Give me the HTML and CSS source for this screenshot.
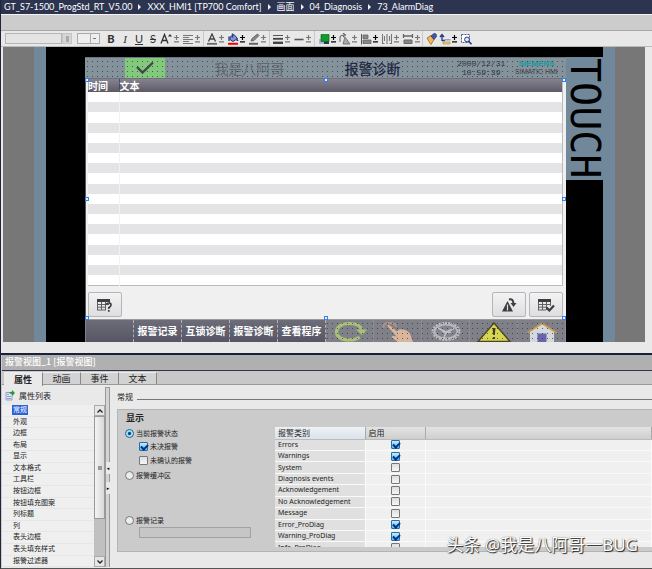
FILE: index.html
```html
<!DOCTYPE html>
<html lang="zh-CN">
<head>
<meta charset="utf-8">
<title>73_AlarmDiag</title>
<link rel="stylesheet" href="styles.css">
</head>
<body>
<svg class="defs" aria-hidden="true">
  <symbol id="pm" viewBox="0 0 5 8"><path d="M2.5 0v5M0 2.5h5M0 6.8h5" stroke="currentColor" stroke-width="1.2" fill="none"/></symbol>
</svg>
<div class="app">
  <nav class="crumbs" aria-label="路径">
    <a href="#">GT_S7-1500_ProgStd_RT_V5.00</a><i></i><a href="#">XXX_HMI1 [TP700 Comfort]</a><i></i><a href="#">画面</a><i></i><a href="#">04_Diagnosis</a><i></i><a href="#">73_AlarmDiag</a>
  </nav>
  <div class="strip"></div>
  <div class="toolbar" role="toolbar" aria-label="格式">
    <input class="font-name" type="text" aria-label="字体"><span class="font-btn"></span>
    <select class="font-size" aria-label="字号"><option></option></select>
    <div class="group first">
      <button class="tool b" aria-label="粗体">B</button>
      <button class="tool i" aria-label="斜体">I</button>
      <button class="tool u" aria-label="下划线">U</button>
      <button class="tool s" aria-label="删除线">S</button>
      <button class="split dim" aria-label="字号"><svg class="ic" viewBox="0 0 14 12"><path d="M1 10.500L4.500 1.500L8 10.500M2.300 7.500h4.500" stroke="#333" stroke-width="1.300" fill="none"/><path d="M8 3.500l2-2.500 2 2.500z" fill="#333"/></svg><svg class="pm"><use href="#pm"/></svg></button>
      <button class="split dim" aria-label="对齐"><svg class="ic" viewBox="0 0 14 12"><path d="M2 2.500h10M2 4.500h6M2 6.500h10M2 8.500h6M2 10.500h10" stroke="#777" stroke-width="1.200"/></svg><svg class="pm"><use href="#pm"/></svg></button>
    </div>
    <div class="group">
      <button class="split dim" aria-label="文字颜色"><svg class="ic" viewBox="0 0 14 12"><path d="M3.500 8.500L7 1L10.500 8.500M4.800 6h4.500" stroke="#444" stroke-width="1.300" fill="none"/><path d="M2 10.800h10" stroke="#666" stroke-width="1.800"/></svg><svg class="pm"><use href="#pm"/></svg></button>
      <button class="split" aria-label="填充颜色"><svg class="ic" viewBox="0 0 14 12"><path d="M4 4l4-2.500 3.500 4-4.500 3-3-2z" fill="#7e96cf" stroke="#26387c"/><path d="M3 8V3.500M6.500 0.500v4" stroke="#26387c" stroke-width="1.300"/><path d="M10.500 4l2 4h-2z" fill="#26387c"/><path d="M2 10.800h10" stroke="#f00" stroke-width="2"/></svg><svg class="pm"><use href="#pm"/></svg></button>
      <button class="split dim" aria-label="线条颜色"><svg class="ic" viewBox="0 0 14 12"><path d="M4 8l1-2.500L10.500 1l1.500 1.500L7 7.500z" fill="#888" stroke="#555" stroke-width=".8"/><path d="M2 10.800h9" stroke="#666" stroke-width="2"/></svg><svg class="pm"><use href="#pm"/></svg></button>
    </div>
    <div class="group">
      <button class="split dim" aria-label="线宽"><svg class="ic" viewBox="0 0 14 12"><path d="M2 2.500h10" stroke="#555"/><path d="M2 5.800h10" stroke="#444" stroke-width="1.800"/><path d="M2 9.800h10" stroke="#444" stroke-width="2.400"/></svg><svg class="pm"><use href="#pm"/></svg></button>
      <button class="split dim" aria-label="线型"><svg class="ic" viewBox="0 0 14 12"><path d="M2.500 6.500h9" stroke="#555" stroke-width="1.600"/></svg><svg class="pm"><use href="#pm"/></svg></button>
    </div>
    <div class="group wide">
      <button class="split" aria-label="层次"><svg class="ic" viewBox="0 0 14 12"><path d="M2 6h5v5H2z" fill="#a9b6d8"/><path d="M7 7h5v4H7z" fill="#335"/><path d="M4 1.500h8v7H4z" fill="#129a2c" stroke="#0a6a1b" stroke-width=".7"/></svg><svg class="pm"><use href="#pm"/></svg></button>
      <button class="split dim" aria-label="旋转"><svg class="ic" viewBox="0 0 14 12"><path d="M7 4l5 7H5z" fill="#aaa" stroke="#777"/><path d="M2 9V5q0-3 4-3M5 0l2.500 2L5 4" stroke="#666" stroke-width="1.100" fill="none"/></svg><svg class="pm"><use href="#pm"/></svg></button>
      <button class="split" aria-label="左对齐"><svg class="ic" viewBox="0 0 14 12"><path d="M2.500 1v10.500" stroke="#555"/><path d="M4 2h5v3.500H4zM4 7h8v3.500H4z" fill="#888" stroke="#666" stroke-width=".8"/></svg><svg class="pm"><use href="#pm"/></svg></button>
      <button class="split dim" aria-label="分布"><svg class="ic" viewBox="0 0 14 12"><path d="M2.500 1v9.500h2M11.500 1v9.500h-2M7 1v10M4.500 3v5M9.500 3v5" stroke="#777" stroke-width="1.100" fill="none"/></svg><svg class="pm"><use href="#pm"/></svg></button>
      <button class="split dim" aria-label="等宽"><svg class="ic" viewBox="0 0 14 12"><path d="M2.500 1v4M11.500 1v4M2.500 3h9" stroke="#666" stroke-width="1.300"/><path d="M3 7h8v3.500H3z" fill="#888" stroke="#666"/></svg><svg class="pm"><use href="#pm"/></svg></button>
    </div>
    <div class="group">
      <button class="tool" aria-label="格式刷"><svg class="ic" viewBox="0 0 14 12"><path d="M3 5l4-2.500 3 4L7 11.500 5.500 9.500z" fill="#f0b95a" stroke="#a5641c" stroke-width=".8"/><path d="M7 3l3-2.500 2 .5.500 2.500L10 6.500z" fill="#4158a5" stroke="#26387c" stroke-width=".8"/></svg></button>
      <button class="split" aria-label="跳转顺序"><svg class="ic" viewBox="0 0 14 12"><path d="M4 8V2.500M2 4l2-2.500L6 4M4 7.500h3" stroke="#26387c" stroke-width="1.300" fill="none"/><path d="M6.500 6h6v1.500h-6z" fill="#8fa2cf"/><path d="M5 9h7v2H5z" fill="#f3d28b" stroke="#b78d35" stroke-width=".7"/></svg><svg class="pm"><use href="#pm"/></svg></button>
      <button class="tool" aria-label="缩放"><svg class="ic" viewBox="0 0 14 12"><path d="M2.500 1.500h8v8h-8z" fill="#fff" stroke="#445a94" stroke-dasharray="2 1"/><circle cx="8" cy="6.500" r="2.400" fill="#dfe9fa" stroke="#26387c"/><path d="M9.700 8.200l2.800 3" stroke="#26387c" stroke-width="1.600"/></svg></button>
    </div>
  </div>

  <main class="canvas">
    <div class="bezel"></div>
    <div class="black"></div>
    <div class="screen">
      <div class="head dots">
        <span class="ok"><svg viewBox="0 0 20 14"><path d="M2 6l5.500 5.500L18 1.500" fill="none" stroke="#45484a" stroke-width="2.400"/></svg></span>
        <span class="owner">我是八阿哥</span>
        <span class="title">报警诊断</span>
        <time>2000/12/31<br>10:59:39</time>
        <span class="brand"><b>SIEMENS</b><br>SIMATIC HMI</span>
      </div>
      <div class="alarm">
        <table class="rows">
          <thead><tr><th>时间</th><th>文本</th></tr></thead>
          <tbody>
            <tr><td></td><td></td></tr><tr><td></td><td></td></tr><tr><td></td><td></td></tr><tr><td></td><td></td></tr><tr><td></td><td></td></tr>
            <tr><td></td><td></td></tr><tr><td></td><td></td></tr><tr><td></td><td></td></tr><tr><td></td><td></td></tr><tr><td></td><td></td></tr>
            <tr><td></td><td></td></tr><tr><td></td><td></td></tr><tr><td></td><td></td></tr><tr><td></td><td></td></tr><tr><td></td><td></td></tr>
            <tr><td></td><td></td></tr><tr><td></td><td></td></tr><tr><td></td><td></td></tr><tr><td></td><td></td></tr>
          </tbody>
        </table>
        <div class="actions">
          <button aria-label="信息文本"><svg viewBox="0 0 18 14"><path d="M1 1h13v3H1z" fill="#3f3c40"/><path d="M1.500 4v8M5.500 4v8M9.500 4v8M13.500 4v2M1 6.500h12M1 9.200h9M1 12h9" stroke="#625f64" fill="none"/><path d="M10.500 7q0-2 2.300-2T15 7q0 1.300-2.200 2.800V11M12.800 12v1.800" stroke="#3f3c40" stroke-width="1.700" fill="none"/></svg></button>
          <span></span>
          <button aria-label="报警回路"><svg viewBox="0 0 18 14"><path d="M7.500 3l5.500 10.500H2z" fill="#3f3c40"/><path d="M7.500 6.500v6" stroke="#ddd" stroke-width="1.200"/><path d="M9 1.500q4-1.500 4.500 4" stroke="#3f3c40" stroke-width="2" fill="none"/><path d="M10.500 5h6l-3 4z" fill="#3f3c40"/></svg></button>
          <button aria-label="确认"><svg viewBox="0 0 18 14"><path d="M1 1h13v3H1z" fill="#3f3c40"/><path d="M1.500 4v8M5.500 4v8M9.500 4v8M13.500 4v4M1 6.500h13M1 9.200h9M1 12h8" stroke="#625f64" fill="none"/><path d="M9.500 9.500l2.800 3L17 7.500" stroke="#3f3c40" stroke-width="2.200" fill="none"/></svg></button>
        </div>
        <i class="h tl"></i><i class="h tc"></i><i class="h tr"></i><i class="h ml"></i><i class="h mr"></i><i class="h bl"></i><i class="h bc"></i><i class="h br"></i>
      </div>
      <div class="keys dots">
        <button class="key" aria-label="空"></button><button class="key">报警记录</button><button class="key">互锁诊断</button><button class="key">报警诊断</button><button class="key">查看程序</button>
        <button class="pic" aria-label="循环"><svg viewBox="0 0 36 22"><path d="M29.500 9.500C28 4 22 3.500 17 3.500C9 3.500 4.500 7.500 4.500 12S9 20 17 20q7 0 10.500-3" fill="none" stroke="#a9c077" stroke-width="3.200"/><path d="M24 9.500h11l-5 5.500z" fill="#a9c077"/></svg></button>
        <button class="pic" aria-label="手动"><svg viewBox="0 0 36 22"><path d="M4 8q-2-5 5-5t7 4" fill="none" stroke="#b58f88" stroke-width="2"/><path d="M7 5.500q2-1.500 4 1l6 5 2-2q6-1 11 4l3 8.500H18l-6-4.500q-1-2 1.500-1.500l3 .5z" fill="#d9b59c"/></svg></button>
        <button class="pic" aria-label="设置"><svg viewBox="0 0 36 22"><ellipse cx="18" cy="11.500" rx="13.500" ry="8.500" fill="none" stroke="#bfc1c4" stroke-width="2" stroke-dasharray="2 1.200"/><ellipse cx="18" cy="11.500" rx="11.500" ry="7" fill="#85858e" stroke="#b5b7ba" stroke-width="2"/><path d="M18 12l-8-4M18 12l8-3.500M18 12l-2 6M14 11l4 2 5-1" stroke="#bfc1c4" stroke-width="1.600" fill="none"/></svg></button>
        <button class="pic" aria-label="报警"><svg viewBox="0 0 36 22"><path d="M18 3L34 21.500H2z" fill="#d8d650" stroke="#46462c" stroke-width="1.400"/><path d="M16.500 8h3l-.7 7h-1.600zM17 17h2v2h-2z" fill="#3d3d28"/></svg></button>
        <button class="pic" aria-label="主页"><svg viewBox="0 0 36 22"><path d="M6 11L18 4l12 7v11H6z" fill="#d3d8da"/><path d="M3 13L18 3.500 33 13" fill="none" stroke="#c99b52" stroke-width="1.500"/><path d="M13.500 13.500h9V22h-9z" fill="#6763ae"/></svg></button>
      </div>
    </div>
    <div class="side"><div class="touch">TOUCH</div></div>
    <div class="bezel"></div>
  </main>

  <section class="inspector">
    <h2>报警视图_1 [报警视图]</h2>
    <div class="tabs" role="tablist">
      <button role="tab" aria-selected="true" class="on">属性</button><button role="tab">动画</button><button role="tab">事件</button><button role="tab">文本</button>
    </div>
    <div class="panel">
      <aside>
        <div class="aside-title"><svg viewBox="0 0 10 11"><path d="M1 2.500h6v7.500H1z" fill="#dde5f4" stroke="#8593bd" stroke-width=".8"/><path d="M2.500 4.500h1M2.500 6.500h1M2.500 8.500h1M4.500 6.500h1M4.500 8.500h1" stroke="#4a5fa5"/><path d="M4 3q1-1.500 3-1.300V0l3 3-3 3V4Q5 3.500 4 3z" fill="#1d9a35"/></svg>属性列表</div>
        <div class="nav">
          <ul>
            <li><a class="sel" href="#">常规</a></li><li><a href="#">外观</a></li><li><a href="#">边框</a></li><li><a href="#">布局</a></li><li><a href="#">显示</a></li><li><a href="#">文本格式</a></li><li><a href="#">工具栏</a></li><li><a href="#">按钮边框</a></li><li><a href="#">按钮填充图案</a></li><li><a href="#">列标题</a></li><li><a href="#">列</a></li><li><a href="#">表头边框</a></li><li><a href="#">表头填充样式</a></li><li><a href="#">报警过滤器</a></li>
          </ul>
          <div class="scroll">
            <button aria-label="向上"><svg viewBox="0 0 8 6"><path d="M1.500 4.500L4 2l2.500 2.500" fill="none" stroke="#222" stroke-width="1.300"/></svg></button>
            <div class="thumb"><i></i></div>
            <button aria-label="向下"><svg viewBox="0 0 8 6"><path d="M1.500 1.500L4 4l2.500-2.500" fill="none" stroke="#222" stroke-width="1.300"/></svg></button>
          </div>
        </div>
      </aside>
      <div class="splitter"><button aria-label="收起">◂</button><button aria-label="展开">▸</button></div>
      <div class="content">
        <h3>常规</h3>
        <div class="box">
          <form class="opts">
            <h4>显示</h4>
            <label><input type="radio" name="m" checked>当前报警状态</label>
            <label class="sub"><input type="checkbox" checked>未决报警</label>
            <label class="sub second"><input type="checkbox">未确认的报警</label>
            <label><input type="radio" name="m">报警缓冲区</label>
            <label class="log"><input type="radio" name="m">报警记录</label>
            <input class="field" type="text" aria-label="报警记录" disabled>
          </form>
          <div class="clip">
            <table class="classes">
              <thead><tr><th>报警类别</th><th>启用</th><th></th></tr></thead>
              <tbody>
                <tr><td>Errors</td><td><input type="checkbox" aria-label="Errors" checked></td><td></td></tr>
                <tr><td>Warnings</td><td><input type="checkbox" aria-label="Warnings" checked></td><td></td></tr>
                <tr><td>System</td><td><input type="checkbox" aria-label="System"></td><td></td></tr>
                <tr><td>Diagnosis events</td><td><input type="checkbox" aria-label="Diagnosis events"></td><td></td></tr>
                <tr><td>Acknowledgement</td><td><input type="checkbox" aria-label="Acknowledgement"></td><td></td></tr>
                <tr><td>No Acknowledgement</td><td><input type="checkbox" aria-label="No Acknowledgement"></td><td></td></tr>
                <tr><td>Message</td><td><input type="checkbox" aria-label="Message"></td><td></td></tr>
                <tr><td>Error_ProDiag</td><td><input type="checkbox" aria-label="Error_ProDiag" checked></td><td></td></tr>
                <tr><td>Warning_ProDiag</td><td><input type="checkbox" aria-label="Warning_ProDiag" checked></td><td></td></tr>
                <tr><td>Info_ProDiag</td><td><input type="checkbox" aria-label="Info_ProDiag"></td><td></td></tr>
              </tbody>
            </table>
          </div>
        </div>
      </div>
    </div>
    <div class="mark">头条 @我是八阿哥一BUG</div>
  </section>
</div>
</body>
</html>
```
FILE: styles.css
```css
* { box-sizing: border-box; }
body {
  margin: 0;
  background: #e9e9e9;
  color: #222;
  font: 8px/11px "Noto Sans", "Noto Sans CJK SC", sans-serif;
}
button, input, select {
  margin: 0;
  padding: 0;
  font: inherit;
  color: inherit;
  border: 0;
  background: none;
  border-radius: 0;
}
h2, h3, h4, ul { margin: 0; padding: 0; list-style: none; }
a { color: inherit; text-decoration: none; }
.defs { display: none; }
.app { min-height: 100vh; border-left: 1px solid #20243c; border-bottom: 1px solid #555; overflow: hidden; }

/* breadcrumb */
.crumbs {
  display: flex;
  align-items: center;
  height: 14px;
  padding-left: 3px;
  background: #2c3450;
  color: #fff;
  font: 9px/14px Lato, "Noto Sans CJK SC", sans-serif;
  white-space: nowrap;
}
.crumbs i {
  margin: 0 6px;
  border-left: 3px solid #f0f2f8;
  border-top: 3px solid transparent;
  border-bottom: 3px solid transparent;
}
.strip { height: 17px; background: #ccc; border-top: 1px solid #f4f4f4; border-bottom: 1px solid #a8a8a8; }

/* toolbar */
.toolbar { display: flex; align-items: center; height: 16px; padding-left: 4px; background: #e8e8e8; border-bottom: 1px solid #bbb; }
.font-name { width: 57px; height: 11px; background: #e4e4e4; border: 1px solid #b5b5b5; }
.font-btn { width: 10px; height: 11px; background: linear-gradient(90deg, transparent 3px, #aaa 3px, #aaa 6px, transparent 6px) 0 2px / 10px 6px no-repeat #d6d6d6; border: 1px solid #c4c4c4; }
.font-size {
  appearance: none;
  width: 23px;
  height: 11px;
  margin-left: 5px;
  border: 1px solid #aaa;
  background: linear-gradient(#aaa, #aaa) 12px 0 / 1px 10px no-repeat, linear-gradient(#777, #777) 15px 4px / 3px 1px no-repeat, #eee;
}
.group { display: flex; align-items: center; padding: 0 1px; border-right: 1px solid #c8c8c8; height: 15px; }
.group.first { padding-left: 4px; }
.group.wide { padding: 0 0 0 2px; }
.group:last-child { border: 0; }
.tool { width: 14px; height: 14px; font: 11px/14px Lato, sans-serif; color: #333; display: flex; align-items: center; justify-content: center; }
.b { font-weight: 900; }
.i { font-style: italic; font-family: "Liberation Serif", serif; }
.u { text-decoration: underline; }
.s { text-decoration: line-through; }
.split { display: flex; align-items: center; width: 21px; height: 14px; color: #000; }
.dim { color: #777; }
.ic { width: 14px; height: 12px; flex: none; }
.pm { width: 5px; height: 8px; flex: none; }

/* editor canvas */
.canvas { display: flex; height: 295px; padding: 0 30px 0 31px; margin: 0 7px 0 2px; background: #777; }
.bezel { width: 12px; background: #71889b; flex: none; }
.black { width: 39px; background: #000; flex: none; }
.side { width: 37px; background: #000; flex: none; padding-top: 10px; }
.touch {
  display: flex;
  align-items: center;
  justify-content: center;
  height: 123px;
  background: #71889b;
  color: #000;
  font: 40px/37px "DejaVu Sans Mono", monospace;
  writing-mode: vertical-rl;
}
.screen { flex: 1; min-width: 0; display: flex; flex-direction: column; border-top: 10px solid #000; background: #f0f0f0; }
.dots { position: relative; }
.dots::after {
  content: "";
  position: absolute;
  inset: 0;
  background: conic-gradient(from 270deg at 1px 1px, #2f363dbb 90deg, transparent 0) 2px 3px / 5px 5px;
  pointer-events: none;
}
.head {
  display: grid;
  grid-template-columns: 40fr 168fr 78fr 95fr 59fr;
  align-items: center;
  height: 22px;
  padding-left: 40px;
  background: #84929c;
  border-top: 1px solid #6b7780;
  border-bottom: 1px solid #6f6f7a;
}
.head > span { text-align: center; }
.ok { height: 20px; background: #82c97c; display: flex; align-items: center; justify-content: center; }
.ok svg { width: 20px; height: 14px; }
.owner { font: 14px/20px "Noto Sans CJK SC", sans-serif; color: #62676f; }
.title { font: 500 14px/20px "Noto Sans CJK SC", sans-serif; color: #23263f; }
.head time { font: 8px/9px "Liberation Mono", monospace; color: #30363c; text-align: center; padding-left: 44px; }
.brand { font: 7px/8px "Liberation Sans", sans-serif; color: #394047; white-space: nowrap; }
.brand b { font-size: 8px; color: #159c9c; }
.alarm { position: relative; height: 240px; padding: 0 3px 0 2px; background: #f0f0f0; border-left: 1px solid #555560; }
.rows { width: 100%; height: 207px; border-collapse: collapse; background: #fff; border-bottom: 1px solid #bbb; border-right: 1px solid #bbb; table-layout: fixed; }
.rows th {
  height: 13px;
  padding: 0;
  text-align: left;
  color: #fff;
  font: bold 10px/12px "Noto Sans CJK SC", sans-serif;
  background: linear-gradient(#85838f, #5c5a66);
}
.rows th:first-child { width: 31px; border-right: 1px solid #4c4a56; }
.rows td { height: 10px; padding: 0; }
.rows tbody tr:nth-child(even) td { background: #e4e4e6; }
.rows td:first-child { border-right: 1px solid #f2f2f2; }
.actions { display: flex; gap: 3px; padding: 6px 0 0; }
.actions span { flex: 1; }
.actions button { width: 34px; height: 25px; border: 1px solid #b4b4bb; border-radius: 2px; background: linear-gradient(#f3f3f4, #dedee0); display: flex; align-items: center; justify-content: center; }
.actions svg { width: 18px; height: 14px; }
.h { position: absolute; z-index: 2; width: 4px; height: 4px; background: #e6f1ff; border: 1px solid #3b7fe0; }
.tl, .tc, .tr { top: -1px; }
.ml, .mr { top: 118px; }
.bl, .bc, .br { bottom: -1px; }
.tl, .ml, .bl { left: -1px; }
.tc, .bc { left: 50%; margin-left: -2px; }
.tr, .mr, .br { right: 0; }
.keys { display: grid; grid-template-columns: repeat(10, 1fr); height: 23px; background: #808089; border-top: 1px solid #999; padding-left: 1px; }
.key { color: #fff; font: bold 10px/22px "Noto Sans CJK SC", sans-serif; background: linear-gradient(#6d6d79, #555564); border-right: 1px dashed #b0b0b8; white-space: nowrap; z-index: 1; }
.pic { display: flex; align-items: center; justify-content: center; border-right: 1px solid #8c8c96; }
.pic svg { width: 36px; height: 22px; flex: none; }

/* inspector */
.inspector { position: relative; margin-top: 11px; border-top: 2px solid #1d2138; padding-left: 1px; background: #ccc; }
.inspector h2 { height: 15px; padding-left: 3px; font: 500 9px/14px "Noto Sans CJK SC", sans-serif; color: #fff; background: #b0b0b0; }
.tabs { display: flex; height: 15px; padding-left: 2px; border-top: 1px solid #30344c; border-bottom: 1px solid #999; background: #c8c8c8; }
.tabs button { width: 38px; margin-top: 1px; font: 9px/12px "Noto Sans CJK SC", sans-serif; background: #d2d2d2; border: 1px solid #888; border-width: 1px 1px 0 0; border-top-color: #eee; }
.tabs .on { width: 39px; background: #e9e9e9; font-weight: bold; height: 14px; }
.panel { display: flex; height: 182px; background: #e9e9e9; }
aside { width: 103px; flex: none; display: flex; flex-direction: column; }
.aside-title { display: flex; align-items: center; gap: 4px; height: 20px; padding-left: 3px; }
.aside-title svg { width: 10px; height: 11px; }
.nav { display: flex; flex: 1; min-height: 0; }
.nav ul { flex: 1; display: flex; flex-direction: column; background: #efefef; }
.nav li { flex: 1; min-height: 0; padding-left: 10px; border-bottom: 1px solid #e6e6e6; font-size: 7px; line-height: 10px; }
.nav a { display: inline-block; padding: 0 1px; }
.sel { background: #2a62d8; color: #fff; }
.scroll { width: 11px; display: flex; flex-direction: column; background: #c0c0c0; }
.scroll button { height: 11px; background: #e6e6e6; border: 1px solid #aaa; display: flex; align-items: center; justify-content: center; }
.scroll button:last-child { margin-top: auto; }
.scroll svg { width: 8px; height: 6px; }
.thumb { height: 103px; background: linear-gradient(90deg, #f4f4f4, #d8d8d8); border: 1px solid #999; display: flex; align-items: center; justify-content: center; }
.thumb i { width: 4px; height: 4px; background: #999; }
.splitter { width: 5px; flex: none; margin-top: 2px; border: 1px solid #999; border-bottom: 0; background: #d4d4d4; display: flex; flex-direction: column; justify-content: center; gap: 8px; }
.splitter button { width: 4px; height: 12px; font: 5px/12px "DejaVu Sans", sans-serif; background: #e9e9e9; color: #000; }
.content { flex: 1; min-width: 0; padding-left: 7px; }
.content h3 { display: flex; align-items: center; gap: 4px; height: 24px; font: 8px/24px "Noto Sans CJK SC", sans-serif; }
.content h3::after { content: ""; flex: 1; height: 1px; margin-top: 5px; background: #777; }
.box { display: flex; height: 143px; background: #cbcbcb; border: 1px solid #b4b4b4; border-right: 0; }
.opts { width: 157px; flex: none; padding: 1px 0 0 7px; font-size: 7px; display: flex; flex-direction: column; align-items: flex-start; }
.opts h4 { height: 16px; padding-left: 1px; font: bold 9px/14px "Noto Sans CJK SC", sans-serif; }
.opts label { display: flex; align-items: center; gap: 2px; height: 13px; white-space: nowrap; }
.opts .sub { margin-left: 14px; }
.opts .second { margin-top: 1px; }
.opts .second + label { margin-top: 2px; }
.opts .log { margin-top: 32px; }
.field { width: 112px; height: 11px; margin-left: 14px; border: 1px solid #a2a2a2; background: #c6c6c6; }
input[type="radio"] { appearance: none; flex: none; width: 9px; height: 9px; border: 1px solid #777; border-radius: 50%; background: #ececec; }
input[type="radio"]:checked { border-color: #245a9a; background: radial-gradient(circle, #10376f 0, #10376f 1px, #7fdcf5 2px, #d8f4fb 4px); }
input[type="checkbox"] { appearance: none; display: block; flex: none; width: 9px; height: 9px; border: 1px solid #777; border-radius: 1px; background: linear-gradient(#ddd, #f6f6f6); position: relative; }
input[type="checkbox"]:checked { border-color: #2b6aa6; background: linear-gradient(#c6ecfa, #3fc4ef); }
input[type="checkbox"]:checked::after { content: ""; position: absolute; left: 2px; top: 0; width: 3px; height: 5px; border: solid #0b2f80; border-width: 0 2px 2px 0; transform: rotate(45deg); }
.clip { flex: 1; min-width: 0; height: 120px; margin-top: 17px; overflow: hidden; }
.classes { width: 100%; height: 127px; border-collapse: collapse; table-layout: fixed; background: #f0f0f0; }
.classes th, .classes td { padding: 0 0 0 3px; height: 11px; line-height: 10px; text-align: left; white-space: nowrap; font-weight: 400; border-right: 1px solid #fafafa; border-bottom: 1px solid #fafafa; }
.classes td { font-size: 7px; }
.classes th { height: 12px; border-right-color: #aaa; border-bottom-color: #bbb; background: linear-gradient(#e2e2e2, #cfcfcf); }
.classes th:first-child { width: 90px; background: linear-gradient(#eef2f7, #dbe2ea); }
.classes th:nth-child(2) { width: 60px; }
.classes td:first-child { background: #e0e0e0; }
.classes td:nth-child(2) { padding: 0; }
.classes td input { margin: 0 auto; }
.mark { position: absolute; right: 14px; bottom: 10px; font: 17px/24px "Noto Sans", "Noto Sans CJK SC", sans-serif; color: #fff; text-shadow: 1px 1px 1px #222, 0 0 1px #555; white-space: nowrap; }
```
